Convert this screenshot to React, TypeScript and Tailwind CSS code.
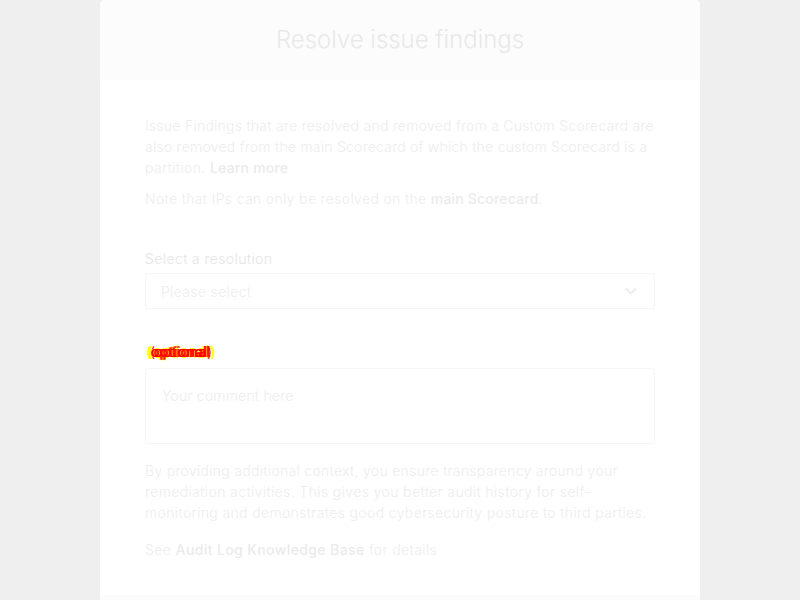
const paragraph = "text-sm leading-[21px] text-[#ededed] whitespace-nowrap font-light";
const strong = "font-medium text-[#ebebeb]";

export default function App() {
  return (
    <div className="flex h-[600px] w-[800px] justify-center overflow-hidden bg-[#efefef] font-['Inter',sans-serif]">
      <main className="flex h-[600px] w-[600px] flex-col overflow-hidden rounded-t-[5px] bg-white">
        <header className="flex h-20 shrink-0 items-center justify-center bg-[#fcfcfc]">
          <h1 className="text-2xl font-[350] tracking-[-0.03px] text-[#e9e9e9]">Resolve issue findings</h1>
        </header>
        <section className="h-[515px] shrink-0 px-[45px] pt-[35px] tracking-[0.2px]">
          <p className={`${paragraph} tracking-[0.25px]`}>
            Issue Findings that are resolved and removed from a Custom Scorecard are<br />
            <span className="tracking-[0.24px]">also removed from the main Scorecard of which the custom Scorecard is a</span><br />
            <span className="tracking-[0.38px]">partition. </span>
            <b className={`${strong} tracking-[0.2px]`}>Learn more</b>
          </p>
          <p className={`${paragraph} mt-2.5 tracking-[0.34px]`}>
            Note that IPs can only be resolved on the <b className={`${strong} tracking-[0.2px]`}>main Scorecard</b>.
          </p>
          <div className="mt-[39px] text-sm leading-[21px] font-light tracking-[0.4px] text-[#e5e5e5]">Select a resolution</div>
          <div className="mt-1 flex h-9 items-center justify-between rounded-[3px] border border-[#f5f5f5] pr-[17px] pl-[15px] text-sm font-light text-[#ededed]">
            <span className="pt-0.5 tracking-[0.33px]">Please select</span>
            <svg className="h-3 w-3" viewBox="0 0 12 12" fill="none" stroke="#ececec" strokeWidth="1.8">
              <path d="M1 3.5 6 8.5 11 3.5" />
            </svg>
          </div>
          <div className="mt-[32px] h-[21px] pl-[3px] text-sm leading-[21px] tracking-[0.45px] text-[#ff0000]">
            <span className="text-[#ffff00] [text-shadow:-2px_0_#ffff00,-1px_0_#ffff00,2px_0_#ff0000]">(</span>
            <span className="[text-shadow:-3px_0_#ff0000,-2px_0_#ff0000,1px_0_#ff0000,-4px_0_#ffff00,-1px_0_#ffff00,2px_0_#ffff00,0_-1px_#ffff00,0_1px_#ffff00]">optional</span>
            <span className="text-[#ffff00] [text-shadow:1px_0_#ffff00,-3px_0_#ff0000]">)</span>
          </div>
          <div className="mt-[6px] h-[76px] rounded-[3px] border border-[#f5f5f5] px-4 pt-4 text-sm leading-[21px] font-light text-[#ededed]">
            Your comment here
          </div>
          <p className={`${paragraph} mt-4`}>
            <span className="tracking-[0.3px]">By providing additional context, you ensure transparency around your</span><br />
            <span className="tracking-[0.38px]">remediation activities. This gives you better audit history for self-</span><br />
            <span className="tracking-[0.36px]">monitoring and demonstrates good cybersecurity posture to third parties.</span>
          </p>
          <p className={`${paragraph} mt-4 tracking-[0.39px]`}>
            See <b className={strong}>Audit Log Knowledge Base</b> for details
          </p>
        </section>
        <footer className="h-[5px] shrink-0 bg-[#fcfcfc]" />
      </main>
    </div>
  );
}
